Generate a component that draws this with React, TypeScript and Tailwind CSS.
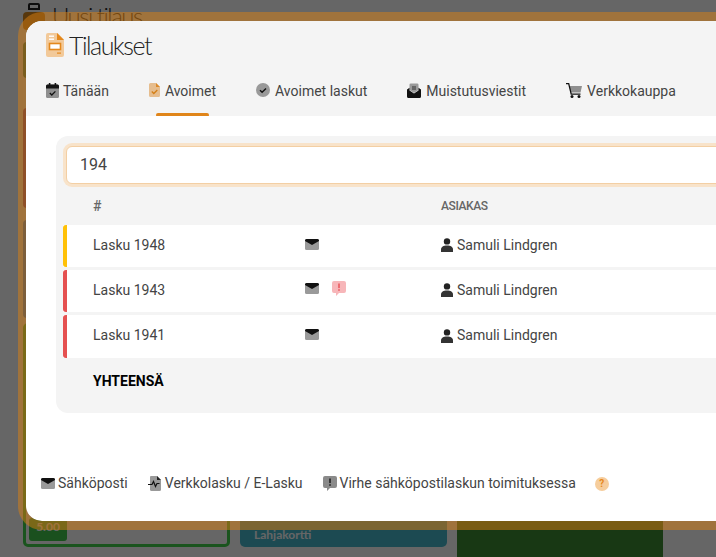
import React from 'react';

const Envelope: React.FC = () => (
  <svg width="14" height="11" viewBox="0 0 14 11" className="shrink-0">
    <rect x="0" y="0" width="14" height="11" rx="1.5" fill="#9a9a9a" />
    <path d="M0 1.5A1.5 1.5 0 0 1 1.5 0h11A1.5 1.5 0 0 1 14 1.5v.6L7 6 0 2.1Z" fill="#111" />
  </svg>
);

const Bubble: React.FC<{ bg: string; mark: string }> = ({ bg, mark }) => (
  <svg width="14" height="15" viewBox="0 0 14 15" className="shrink-0">
    <path d="M2 0h10a2 2 0 0 1 2 2v8a2 2 0 0 1-2 2H7l-3 3v-3H2a2 2 0 0 1-2-2V2a2 2 0 0 1 2-2Z" fill={bg} />
    <rect x="6.2" y="2.5" width="1.6" height="4.6" fill={mark} />
    <rect x="6.2" y="8.2" width="1.6" height="1.6" fill={mark} />
  </svg>
);

const Person: React.FC = () => (
  <svg width="12" height="14" viewBox="0 0 12 14" className="shrink-0">
    <circle cx="6" cy="3.400" r="3.200" fill="#222" />
    <path d="M0 14v-2.500C0 9 2.300 7.500 6 7.500s6 1.500 6 4V14Z" fill="#333" />
  </svg>
);

const Calendar: React.FC = () => (
  <svg width="13" height="15" viewBox="0 0 13 15" className="shrink-0">
    <rect x="0" y="1.500" width="13" height="13.500" rx="1.500" fill="#8f8f8f" />
    <path d="M0 3a1.500 1.500 0 0 1 1.500-1.500h10A1.500 1.500 0 0 1 13 3v2.500H0Z" fill="#151515" />
    <rect x="2.800" y="0" width="1.600" height="3" fill="#151515" />
    <rect x="8.600" y="0" width="1.600" height="3" fill="#151515" />
    <path d="m3.800 10 2 2 3.600-3.600" fill="none" stroke="#111" strokeWidth="1.300" />
  </svg>
);

const FileCheck: React.FC = () => (
  <svg width="12" height="14" viewBox="0 0 12 14" className="shrink-0">
    <path d="M1.500 0H7l4 4v8.500a1.500 1.500 0 0 1-1.500 1.500h-8A1.500 1.500 0 0 1 0 12.500v-11A1.500 1.500 0 0 1 1.500 0Z" fill="#e6bd8e" />
    <path d="M7 0l4 4H7Z" fill="#dc8a2a" />
    <path d="m2.800 8.500 2 2 3.500-3.500" fill="none" stroke="#d47f16" strokeWidth="1.300" />
  </svg>
);

const Badge: React.FC = () => (
  <svg width="15" height="14" viewBox="0 0 15 14" className="shrink-0">
    <circle cx="7" cy="7" r="7" fill="#999" />
    <path d="m4 7.200 2.100 2.100L10 5.400" fill="none" stroke="#111" strokeWidth="1.400" />
  </svg>
);

const OpenMail: React.FC = () => (
  <svg width="15" height="15" viewBox="0 0 15 15" className="shrink-0">
    <path d="M2.500 7V1.800A1.300 1.300 0 0 1 3.800.5h6.400a1.300 1.300 0 0 1 1.300 1.300V7L7 10Z" fill="#9a9a9a" />
    <rect x="5" y="3.500" width="4" height="1" fill="#333" />
    <rect x="5" y="5.500" width="4" height="1" fill="#333" />
    <path d="M0 6.500 2.500 4.800V7.500L7 10.500l4.500-3V4.800L14 6.500v7A1.500 1.500 0 0 1 12.500 15h-11A1.500 1.500 0 0 1 0 13.500Z" fill="#111" />
  </svg>
);

const Cart: React.FC = () => (
  <svg width="17" height="15" viewBox="0 0 17 15" className="shrink-0">
    <path d="M3.400 3H16l-1.500 6.500H4.700Z" fill="#8f8f8f" />
    <path d="M0 .7h2.700l2.500 10.400h9.300" fill="none" stroke="#111" strokeWidth="1.300" />
    <circle cx="6" cy="13.400" r="1.500" fill="#111" />
    <circle cx="13" cy="13.400" r="1.500" fill="#111" />
  </svg>
);

const FilePulse: React.FC = () => (
  <svg width="13" height="15" viewBox="0 0 13 15" className="shrink-0">
    <path d="M3 0h6l4 4v9.500a1.500 1.500 0 0 1-1.500 1.500h-8A1.500 1.500 0 0 1 2 13.500V1A1 1 0 0 1 3 0Z" fill="#999" />
    <path d="M9 0l4 4H9Z" fill="#222" />
    <path d="M0 8.500h4l1.500-3 2 5 1.500-3h2.500" fill="none" stroke="#111" strokeWidth="1.200" />
  </svg>
);

const TitleIcon: React.FC = () => (
  <svg width="18" height="24" viewBox="0 0 18 24" className="shrink-0">
    <path d="M2 0h9.500L18 6.500V22a2 2 0 0 1-2 2H2a2 2 0 0 1-2-2V2a2 2 0 0 1 2-2Z" fill="#f2c999" />
    <path d="M11 0l7 7h-7Z" fill="#e4881c" />
    <rect x="3" y="2.500" width="5" height="1.400" fill="#fff" />
    <rect x="3" y="5.500" width="5" height="1.400" fill="#fff" />
    <rect x="3.500" y="10.500" width="11" height="6" fill="#fff" stroke="#e4881c" strokeWidth="1.600" />
    <rect x="11" y="19.500" width="4" height="1.200" fill="#e4881c" />
  </svg>
);

const tabs = [
  { label: 'Tänään', icon: <Calendar /> },
  { label: 'Avoimet', icon: <FileCheck />, active: true },
  { label: 'Avoimet laskut', icon: <Badge /> },
  { label: 'Muistutusviestit', icon: <OpenMail /> },
  { label: 'Verkkokauppa', icon: <Cart /> },
];

const rivit = [
  { nimi: 'Lasku 1948', bar: 'bg-[#ffc107]', h: 'h-[42px]', virhe: false },
  { nimi: 'Lasku 1943', bar: 'bg-[#e55050]', h: 'h-[42px]', virhe: true },
  { nimi: 'Lasku 1941', bar: 'bg-[#e55050]', h: 'h-[43px]', virhe: false },
];

export default function App() {
  return (
    <div className="relative h-[557px] w-[716px] overflow-hidden bg-white font-['Roboto',sans-serif] text-[14px] text-[#444]">
      {/* sivu taustalla */}
      <div className="flex h-full flex-col pl-[23px]">
        <div className="flex h-[34px] shrink-0 items-start gap-[7px] pt-[3px]">
          <div className="flex w-[22px] flex-col items-center">
            <div className="h-[7px] w-[12px] rounded-t-[2px] border-2 border-[#222]" />
            <div className="mt-[2px] h-[18px] w-[22px] rounded-[4px] bg-[#d98a20]" />
          </div>
          <span className="font-['Lato',sans-serif] text-[24px] leading-[26px] font-light tracking-[-1.5px] text-[#222]">Uusi tilaus</span>
        </div>
        <div className="flex flex-1 gap-[10px]">
          <div className="flex w-[207px] flex-col">
            <div className="mt-[8px] h-[36px] rounded bg-[#41966a]" />
            <div className="mt-[30px] h-[100px] rounded bg-[#aa509b]" />
            <div className="mt-[12px] h-[98px] rounded bg-[#509bff]" />
            <div className="mt-[5px] flex h-[224px] flex-col justify-end rounded-[5px] border-[3px] border-[#41d24b] p-[3px]">
              <div className="flex h-[23px] w-[38px] items-start justify-center rounded-[3px] bg-[#41c84b] font-['Lato',sans-serif] text-[12px] font-bold text-white">
                5.00
              </div>
            </div>
          </div>
          <div className="flex w-[207px] flex-col justify-end pb-[10px]">
            <div className="flex h-[60px] items-end rounded-[5px] bg-[#46b9cd] px-[14px] pb-[3px] font-['Lato',sans-serif] text-[12px] font-bold text-white">
              Lahjakortti
            </div>
          </div>
          <div className="mt-[100px] w-[206px] bg-[#3c8c32]" />
        </div>
      </div>
      <div className="absolute inset-0 bg-black/60" />

      {/* ikkuna */}
      <div className="absolute left-[18px] top-[12px] h-[518px] w-[1000px] rounded-[24px] border-x-[8px] border-y-[9px] border-[#da8012]/50 bg-white bg-clip-padding">
        <div className="overflow-hidden rounded-t-[16px] bg-[#f4f4f4]">
          <div className="flex h-[49px] items-start gap-[5px] pl-[20px] pt-[12px]">
            <TitleIcon />
            <span className="font-['Lato',sans-serif] text-[25px] leading-[24px] font-light tracking-[-1.5px] text-[#222]">Tilaukset</span>
          </div>
          <div className="flex h-[46px] gap-[39px] pl-[20px] pt-[12px]">
            {tabs.map((t) => (
              <div key={t.label} className="relative flex h-[34px] items-start gap-[4px]">
                <span className="mt-[1px]">{t.icon}</span>
                <span className="pr-[1px] leading-[18px]">{t.label}</span>
                {t.active && (
                  <span className="absolute bottom-[-1px] left-[7px] h-[4px] w-[53px] rounded-[2px] bg-[#e0851a]" />
                )}
              </div>
            ))}
            <div className="mt-[3px] h-[10px] w-[12px] bg-[#e2e2e2]" />
          </div>
        </div>

        <div className="ml-[30px] mt-[20px] h-[277px] rounded-xl bg-[#f4f4f4] pl-[7px] pt-[7px]">
          <div className="p-[3px] pr-0">
            <div className="flex h-[38px] items-center rounded-[6px] border border-[#f3cfa4] bg-white pl-[13px] text-[16px] ring-[3px] ring-[#f8e3ca]">
              194
            </div>
          </div>
          <div className="flex h-[38px] items-center pl-[30px] text-[12px] font-medium tracking-[-0.4px] text-[#666]">
            <span className="w-[348px] text-[14px]">#</span>
            <span>ASIAKAS</span>
          </div>
          <div className="flex flex-col gap-[3px]">
            {rivit.map((r) => (
              <div key={r.nimi} className={`flex ${r.h} items-center bg-white pb-[2px]`}>
                <div className={`-mb-[2px] h-[calc(100%+2px)] w-[4px] rounded-l-[3px] ${r.bar}`} />
                <span className="w-[238px] pl-[26px]">{r.nimi}</span>
                <span className="-mt-[3px] flex w-[136px] items-start gap-[13px]">
                  <span className="mt-[1px]"><Envelope /></span>
                  {r.virhe && (
                    <span className="-mt-[1px]"><Bubble bg="#f7b6b9" mark="#ea5a60" /></span>
                  )}
                </span>
                <span className="flex items-center gap-[4px]">
                  <Person />
                  Samuli Lindgren
                </span>
              </div>
            ))}
          </div>
          <div className="flex h-[46px] items-center pl-[30px] font-bold text-black">YHTEENSÄ</div>
        </div>

        <div className="mt-[60px] flex items-center pl-[15px]">
          <span className="flex items-center gap-[3px]"><Envelope />Sähköposti</span>
          <span className="ml-[20px] flex items-center gap-[4px]"><FilePulse />Verkkolasku / E-Lasku</span>
          <span className="ml-[20px] flex items-center gap-[3px]"><Bubble bg="#8a8a8a" mark="#222" />Virhe sähköpostilaskun toimituksessa</span>
          <span className="ml-[19px] flex h-[14px] w-[14px] items-center justify-center rounded-full bg-[#f6cd9c] text-[10px] font-bold text-[#e8891c]">?</span>
        </div>
      </div>
    </div>
  );
}
